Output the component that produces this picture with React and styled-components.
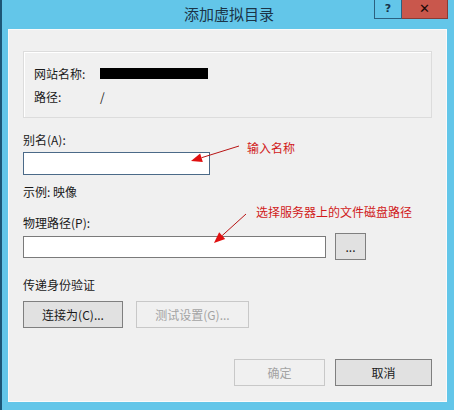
import React from "react";
import styled, { createGlobalStyle } from "styled-components";

const GlobalStyle = createGlobalStyle`
  html, body {
    margin: 0;
    padding: 0;
    background: #63c6e9;
  }
  body {
    font-family: "Noto Sans CJK SC", "Noto Sans", sans-serif;
    font-size: 12px;
    color: #1a1a1a;
  }
`;

const Frame = styled.div`
  position: relative;
  width: 454px;
  height: 410px;
  box-sizing: border-box;
  background: #63c6e9;
  border-left: 2px solid #1d5676;
  display: flex;
  flex-direction: column;
  overflow: hidden;
`;

const TitleBar = styled.div`
  height: 29px;
  display: flex;
  align-items: flex-start;
  position: relative;
`;

const Title = styled.div`
  position: absolute;
  left: 0;
  right: 0;
  top: 4px;
  text-align: center;
  font-size: 15px;
  line-height: 20px;
  color: #1b3447;
  padding-left: 2px;
`;

const Controls = styled.div`
  margin-left: auto;
  margin-right: 6px;
  display: flex;
  z-index: 1;
`;

const ControlButton = styled.div`
  height: 19px;
  width: ${(p) => p.$w}px;
  box-sizing: border-box;
  border: 1px solid ${(p) => (p.$close ? "#8a3b35" : "#2c607f")};
  border-top: none;
  background: ${(p) => (p.$close ? "#c9574c" : "transparent")};
  color: ${(p) => (p.$close ? "#1a0a08" : "#15324a")};
  font-family: "DejaVu Sans", sans-serif;
  font-weight: bold;
  font-size: ${(p) => (p.$close ? 13 : 11)}px;
  line-height: 17px;
  text-align: center;
  & + & {
    border-left: none;
  }
`;

const Content = styled.div`
  flex: 1;
  margin: 0 7px 8px 6px;
  background: #f0f0f0;
  border: 1px solid #fafafa;
  padding: 21px 14px 0 14px;
  display: flex;
  flex-direction: column;
`;

const GroupBox = styled.div`
  height: 67px;
  box-sizing: border-box;
  border: 1px solid #dcdcdc;
  box-shadow: inset 1px 1px 0 #ffffff;
  padding: 14px 10px 0 10px;
  display: grid;
  grid-template-columns: 66px 1fr;
  row-gap: 7px;
  align-content: start;
`;

const InfoLabel = styled.div`
  line-height: 16px;
`;

const Redacted = styled.div`
  width: 108px;
  height: 11px;
  margin-top: 2px;
  background: #000;
`;

const Label = styled.div`
  line-height: 16px;
  margin-top: ${(p) => p.$mt || 0}px;
`;

const TextBox = styled.div`
  height: 23px;
  width: ${(p) => p.$w}px;
  box-sizing: border-box;
  background: #fff;
  border: 1px solid ${(p) => (p.$focus ? "#4b6a88" : "#7a7a7a")};
`;

const Row = styled.div`
  display: flex;
  align-items: center;
  gap: ${(p) => p.$gap || 9}px;
  margin-top: ${(p) => p.$mt || 0}px;
`;

const Button = styled.div`
  width: ${(p) => p.$w}px;
  height: 27px;
  box-sizing: border-box;
  display: flex;
  align-items: center;
  justify-content: center;
  background: ${(p) => (p.$disabled ? "#f0f0f0" : "#e1e1e1")};
  border: 1px solid ${(p) => (p.$disabled ? "#c8c8c8" : "#7f7f7f")};
  color: ${(p) => (p.$disabled ? "#a3a3a3" : "#1a1a1a")};
`;

const Footer = styled.div`
  display: flex;
  justify-content: flex-end;
  gap: 10px;
  margin-top: 31px;
`;

const Note = styled.div`
  position: absolute;
  left: ${(p) => p.$x}px;
  top: ${(p) => p.$y}px;
  color: #d11a1a;
  font-size: 12px;
  line-height: 16px;
  white-space: nowrap;
`;

const Overlay = styled.svg`
  position: absolute;
  left: 0;
  top: 0;
  pointer-events: none;
`;

function Arrow({ x1, y1, x2, y2 }) {
  const a = Math.atan2(y2 - y1, x2 - x1);
  const len = 11;
  const w = 4.5;
  const bx = x2 - len * Math.cos(a);
  const by = y2 - len * Math.sin(a);
  const px = -Math.sin(a) * w;
  const py = Math.cos(a) * w;
  return (
    <g>
      <line x1={x1} y1={y1} x2={bx} y2={by} stroke="#b81414" strokeWidth="1" />
      <polygon
        points={`${x2},${y2} ${bx + px},${by + py} ${bx - px},${by - py}`}
        fill="#e01010"
      />
    </g>
  );
}

export default function App() {
  return (
    <>
      <GlobalStyle />
      <Frame>
        <TitleBar>
          <Title>添加虚拟目录</Title>
          <Controls>
            <ControlButton $w={28}>?</ControlButton>
            <ControlButton $w={46} $close>
              ✕
            </ControlButton>
          </Controls>
        </TitleBar>
        <Content>
          <GroupBox>
            <InfoLabel>网站名称:</InfoLabel>
            <Redacted />
            <InfoLabel>路径:</InfoLabel>
            <InfoLabel>/</InfoLabel>
          </GroupBox>
          <Label $mt={14}>别名(A):</Label>
          <TextBox $w={187} $focus style={{ marginTop: 4 }} />
          <Label $mt={9}>示例: 映像</Label>
          <Label $mt={15}>物理路径(P):</Label>
          <Row $mt={2}>
            <TextBox $w={303} style={{ height: 22 }} />
            <Button $w={31}>...</Button>
          </Row>
          <Label $mt={17}>传递身份验证</Label>
          <Row $mt={8} $gap={13}>
            <Button $w={100}>连接为(C)...</Button>
            <Button $w={113} $disabled>
              测试设置(G)...
            </Button>
          </Row>
          <Footer>
            <Button $w={91} $disabled>
              确定
            </Button>
            <Button $w={97}>取消</Button>
          </Footer>
        </Content>
        <Note $x={245} $y={140}>输入名称</Note>
        <Note $x={254} $y={204}>选择服务器上的文件磁盘路径</Note>
        <Overlay width="454" height="410">
          <Arrow x1={237} y1={146} x2={189} y2={161} />
          <Arrow x1={244} y1={214} x2={212} y2={243} />
        </Overlay>
      </Frame>
    </>
  );
}
